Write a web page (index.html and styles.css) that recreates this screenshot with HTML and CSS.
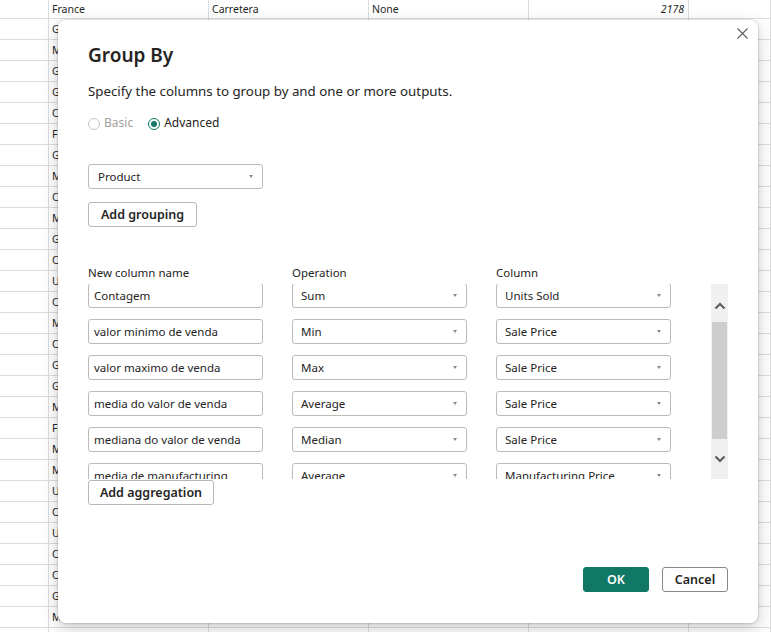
FILE: index.html
```html
<!DOCTYPE html>
<html lang="en">
<head>
<meta charset="utf-8">
<title>Group By</title>
<link rel="stylesheet" href="styles.css">
</head>
<body>
<div class="sheet">
  <div class="row first"><div class="cell"></div><div class="cell txt">France</div><div class="cell txt">Carretera</div><div class="cell txt">None</div><div class="cell num">2178</div><div class="cell"></div></div>
  <div class="row"><div class="cell"></div><div class="cell txt">Germany</div><div class="cell"></div><div class="cell"></div><div class="cell"></div><div class="cell"></div></div>
  <div class="row"><div class="cell"></div><div class="cell txt">Mexico</div><div class="cell"></div><div class="cell"></div><div class="cell"></div><div class="cell"></div></div>
  <div class="row"><div class="cell"></div><div class="cell txt">Germany</div><div class="cell"></div><div class="cell"></div><div class="cell"></div><div class="cell"></div></div>
  <div class="row"><div class="cell"></div><div class="cell txt">Germany</div><div class="cell"></div><div class="cell"></div><div class="cell"></div><div class="cell"></div></div>
  <div class="row"><div class="cell"></div><div class="cell txt">Canada</div><div class="cell"></div><div class="cell"></div><div class="cell"></div><div class="cell"></div></div>
  <div class="row"><div class="cell"></div><div class="cell txt">France</div><div class="cell"></div><div class="cell"></div><div class="cell"></div><div class="cell"></div></div>
  <div class="row"><div class="cell"></div><div class="cell txt">Germany</div><div class="cell"></div><div class="cell"></div><div class="cell"></div><div class="cell"></div></div>
  <div class="row"><div class="cell"></div><div class="cell txt">Mexico</div><div class="cell"></div><div class="cell"></div><div class="cell"></div><div class="cell"></div></div>
  <div class="row"><div class="cell"></div><div class="cell txt">Canada</div><div class="cell"></div><div class="cell"></div><div class="cell"></div><div class="cell"></div></div>
  <div class="row"><div class="cell"></div><div class="cell txt">Mexico</div><div class="cell"></div><div class="cell"></div><div class="cell"></div><div class="cell"></div></div>
  <div class="row"><div class="cell"></div><div class="cell txt">Germany</div><div class="cell"></div><div class="cell"></div><div class="cell"></div><div class="cell"></div></div>
  <div class="row"><div class="cell"></div><div class="cell txt">Canada</div><div class="cell"></div><div class="cell"></div><div class="cell"></div><div class="cell"></div></div>
  <div class="row"><div class="cell"></div><div class="cell txt">United States of America</div><div class="cell"></div><div class="cell"></div><div class="cell"></div><div class="cell"></div></div>
  <div class="row"><div class="cell"></div><div class="cell txt">Canada</div><div class="cell"></div><div class="cell"></div><div class="cell"></div><div class="cell"></div></div>
  <div class="row"><div class="cell"></div><div class="cell txt">Mexico</div><div class="cell"></div><div class="cell"></div><div class="cell"></div><div class="cell"></div></div>
  <div class="row"><div class="cell"></div><div class="cell txt">Canada</div><div class="cell"></div><div class="cell"></div><div class="cell"></div><div class="cell"></div></div>
  <div class="row"><div class="cell"></div><div class="cell txt">Germany</div><div class="cell"></div><div class="cell"></div><div class="cell"></div><div class="cell"></div></div>
  <div class="row"><div class="cell"></div><div class="cell txt">Germany</div><div class="cell"></div><div class="cell"></div><div class="cell"></div><div class="cell"></div></div>
  <div class="row"><div class="cell"></div><div class="cell txt">Mexico</div><div class="cell"></div><div class="cell"></div><div class="cell"></div><div class="cell"></div></div>
  <div class="row"><div class="cell"></div><div class="cell txt">France</div><div class="cell"></div><div class="cell"></div><div class="cell"></div><div class="cell"></div></div>
  <div class="row"><div class="cell"></div><div class="cell txt">Mexico</div><div class="cell"></div><div class="cell"></div><div class="cell"></div><div class="cell"></div></div>
  <div class="row"><div class="cell"></div><div class="cell txt">Mexico</div><div class="cell"></div><div class="cell"></div><div class="cell"></div><div class="cell"></div></div>
  <div class="row"><div class="cell"></div><div class="cell txt">United States of America</div><div class="cell"></div><div class="cell"></div><div class="cell"></div><div class="cell"></div></div>
  <div class="row"><div class="cell"></div><div class="cell txt">Canada</div><div class="cell"></div><div class="cell"></div><div class="cell"></div><div class="cell"></div></div>
  <div class="row"><div class="cell"></div><div class="cell txt">United States of America</div><div class="cell"></div><div class="cell"></div><div class="cell"></div><div class="cell"></div></div>
  <div class="row"><div class="cell"></div><div class="cell txt">Canada</div><div class="cell"></div><div class="cell"></div><div class="cell"></div><div class="cell"></div></div>
  <div class="row"><div class="cell"></div><div class="cell txt">Canada</div><div class="cell"></div><div class="cell"></div><div class="cell"></div><div class="cell"></div></div>
  <div class="row"><div class="cell"></div><div class="cell txt">Germany</div><div class="cell"></div><div class="cell"></div><div class="cell"></div><div class="cell"></div></div>
  <div class="row"><div class="cell"></div><div class="cell txt">Mexico</div><div class="cell"></div><div class="cell"></div><div class="cell"></div><div class="cell"></div></div>
  <div class="row"><div class="cell"></div><div class="cell"></div><div class="cell"></div><div class="cell"></div><div class="cell"></div><div class="cell"></div></div>
</div>

<div class="dialog" role="dialog" aria-label="Group By">
  <div class="close-row">
    <button class="close" aria-label="Close">
      <svg width="11" height="11" viewBox="0 0 11 11"><path d="M0.5 0.5 L10.5 10.5 M10.5 0.5 L0.5 10.5" stroke="#605e5c" stroke-width="1.1" fill="none"/></svg>
    </button>
  </div>
  <h1 class="title">Group By</h1>
  <p class="desc">Specify the columns to group by and one or more outputs.</p>
  <div class="radios">
    <label class="radio disabled"><span class="circle"></span>Basic</label>
    <label class="radio checked"><span class="circle"></span>Advanced</label>
  </div>
  <div class="select product"><span>Product</span><span class="caret"></span></div>
  <button class="btn add-group">Add grouping</button>

  <div class="agg-grid agg-head">
    <div>New column name</div>
    <div>Operation</div>
    <div>Column</div>
  </div>
  <div class="agg-area">
    <div class="agg-scroll">
      <div class="agg-list">
        <div class="agg-grid agg-row">
          <div class="field">Contagem</div>
          <div class="select"><span>Sum</span><span class="caret"></span></div>
          <div class="select"><span>Units Sold</span><span class="caret"></span></div>
        </div>
        <div class="agg-grid agg-row">
          <div class="field">valor minimo de venda</div>
          <div class="select"><span>Min</span><span class="caret"></span></div>
          <div class="select"><span>Sale Price</span><span class="caret"></span></div>
        </div>
        <div class="agg-grid agg-row">
          <div class="field">valor maximo de venda</div>
          <div class="select"><span>Max</span><span class="caret"></span></div>
          <div class="select"><span>Sale Price</span><span class="caret"></span></div>
        </div>
        <div class="agg-grid agg-row">
          <div class="field">media do valor de venda</div>
          <div class="select"><span>Average</span><span class="caret"></span></div>
          <div class="select"><span>Sale Price</span><span class="caret"></span></div>
        </div>
        <div class="agg-grid agg-row">
          <div class="field">mediana do valor de venda</div>
          <div class="select"><span>Median</span><span class="caret"></span></div>
          <div class="select"><span>Sale Price</span><span class="caret"></span></div>
        </div>
        <div class="agg-grid agg-row">
          <div class="field">media de manufacturing</div>
          <div class="select"><span>Average</span><span class="caret"></span></div>
          <div class="select"><span>Manufacturing Price</span><span class="caret"></span></div>
        </div>
      </div>
    </div>
    <div class="scrollbar">
      <div class="sb-btn sb-up">
        <svg width="12" height="8" viewBox="0 0 12 8"><path d="M1.5 6.5 L6 2 L10.5 6.5" stroke="#5f5f5f" stroke-width="2.2" fill="none"/></svg>
      </div>
      <div class="sb-thumb"></div>
      <div class="sb-btn sb-down">
        <svg width="12" height="8" viewBox="0 0 12 8"><path d="M1.5 1.5 L6 6 L10.5 1.5" stroke="#5f5f5f" stroke-width="2.2" fill="none"/></svg>
      </div>
    </div>
  </div>
  <button class="btn add-agg">Add aggregation</button>

  <div class="footer">
    <button class="btn primary">OK</button>
    <button class="btn cancel">Cancel</button>
  </div>
</div>
</body>
</html>
```
FILE: styles.css
```css
* { box-sizing: border-box; }

html, body {
  margin: 0;
  padding: 0;
  background: #ffffff;
  overflow: hidden;
}

body {
  width: 771px;
  height: 632px;
  position: relative;
  font-family: "Noto Sans", "Open Sans", sans-serif;
  color: #252423;
}

/* ---------- spreadsheet background ---------- */
.sheet {
  display: flex;
  flex-direction: column;
}

.row {
  display: grid;
  grid-template-columns: 49px 160px 160px 160px 160px 1fr;
  height: 21px;
}

.row.first { height: 19px; }

.cell {
  border-right: 1px solid #dcdcdc;
  border-bottom: 1px solid #dcdcdc;
  font-size: 10.5px;
  line-height: 20px;
  color: #262626;
  padding: 0 3px;
  white-space: nowrap;
  overflow: hidden;
}

.row.first .cell { line-height: 18px; }

.cell.num {
  text-align: right;
  font-style: italic;
  padding-right: 4px;
}

/* ---------- dialog ---------- */
.dialog {
  position: absolute;
  left: 58px;
  top: 20px;
  width: 700px;
  height: 603px;
  background: #ffffff;
  border-radius: 8px;
  box-shadow: 0 0 0 1px rgba(0, 0, 0, 0.06),
              0 6px 18px rgba(0, 0, 0, 0.18),
              0 1px 4px rgba(0, 0, 0, 0.12);
  padding: 0 30px 31px 30px;
  display: flex;
  flex-direction: column;
  align-items: flex-start;
}

.close-row {
  align-self: stretch;
  display: flex;
  justify-content: flex-end;
  padding-top: 8px;
  margin-right: -20px;
  height: 19px;
}

.close {
  width: 11px;
  height: 11px;
  padding: 0;
  border: 0;
  background: transparent;
  display: block;
}

.close svg { display: block; }

.title {
  margin: 2px 0 0 0;
  font-size: 19px;
  line-height: 28px;
  font-weight: 600;
  color: #252423;
}

.desc {
  margin: 13px 0 0 0;
  font-size: 13.3px;
  line-height: 18px;
  color: #252423;
}

.radios {
  margin-top: 14px;
  display: flex;
  align-items: center;
  height: 18px;
  gap: 15px;
}

.radio {
  display: flex;
  align-items: center;
  font-size: 12px;
  line-height: 18px;
  gap: 4px;
  color: #252423;
}

.radio .circle {
  width: 12px;
  height: 12px;
  border-radius: 50%;
  border: 1px solid #c8c6c4;
  background: #fff;
  margin-top: 1px;
  display: flex;
  align-items: center;
  justify-content: center;
  flex: none;
}

.radio.disabled { color: #a19f9d; }

.radio.checked .circle { border-color: #117865; }

.radio.checked .circle::after {
  content: "";
  width: 6px;
  height: 6px;
  border-radius: 50%;
  background: #117865;
}

/* selects & fields */
.select, .field {
  height: 25px;
  border: 1px solid #bdbbb8;
  border-radius: 3px;
  background: #fff;
  font-size: 11.5px;
  color: #252423;
  display: flex;
  align-items: center;
  white-space: nowrap;
  overflow: hidden;
}

.select {
  padding: 0 9px 0 8px;
  justify-content: space-between;
}

.field { padding: 0 5px; }

.caret {
  width: 0;
  height: 0;
  border-left: 2.5px solid transparent;
  border-right: 2.5px solid transparent;
  border-top: 3px solid #8a8886;
  flex: none;
}

.product {
  width: 175px;
  margin-top: 32px;
  padding-left: 9px;
}

.btn {
  height: 25px;
  border: 1px solid #b9b7b5;
  border-radius: 3px;
  background: #fff;
  font-family: inherit;
  font-size: 12.5px;
  font-weight: 600;
  color: #252423;
  padding: 0;
  line-height: 23px;
  white-space: nowrap;
  text-align: center;
}

.add-group {
  margin-top: 13px;
  width: 109px;
}

/* aggregation grid */
.agg-grid {
  display: grid;
  grid-template-columns: 175px 175px 175px;
  column-gap: 29px;
}

.agg-head {
  margin-top: 38px;
  margin-bottom: 3px;
  font-size: 11.5px;
  line-height: 16px;
  color: #252423;
}

.agg-area {
  align-self: stretch;
  display: flex;
  height: 195px;
}

.agg-scroll {
  flex: 1;
  overflow: hidden;
}

.agg-list {
  margin-top: -1px;
  display: flex;
  flex-direction: column;
  gap: 11px;
}

.scrollbar {
  width: 17px;
  background: #f0f0f0;
  display: flex;
  flex-direction: column;
}

.sb-btn {
  display: flex;
  align-items: center;
  justify-content: center;
}

.sb-up { height: 38px; padding-top: 5px; }

.sb-thumb {
  height: 117px;
  background: #cdcdcd;
  margin: 0 1px;
}

.sb-down { flex: 1; }

.sb-btn svg { display: block; }

.add-agg {
  margin-top: 1px;
  width: 126px;
}

.footer {
  margin-top: auto;
  align-self: stretch;
  display: flex;
  justify-content: flex-end;
  gap: 13px;
}

.footer .btn { width: 66px; }

.btn.primary {
  background: #117865;
  border-color: #117865;
  color: #ffffff;
}

.btn.cancel { border-color: #8a8886; }
```
